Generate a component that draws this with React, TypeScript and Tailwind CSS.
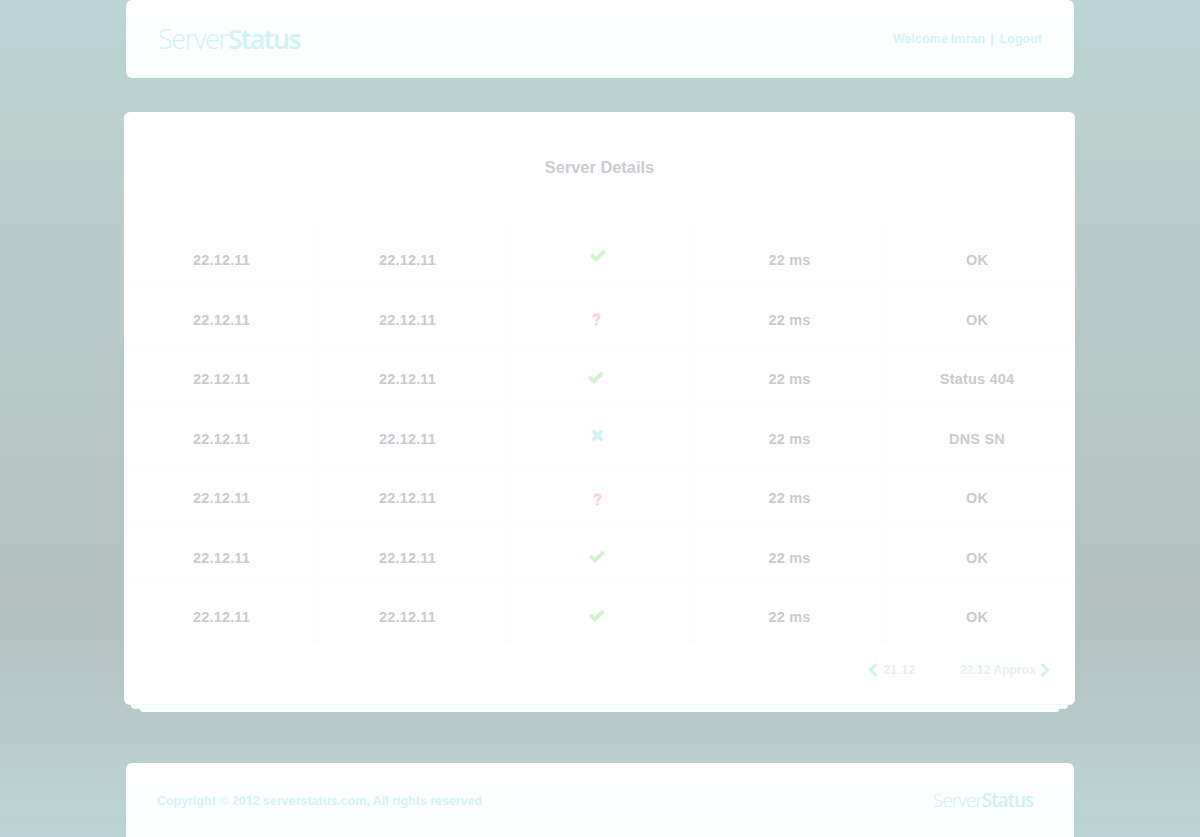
import React from "react";

type Status = "ok" | "unknown" | "fail";

interface Row {
  status: Status;
  place: string;
  height: string;
  result: string;
}

const rows: Row[] = [
  { status: "ok", place: "pl-[2px] pb-[1px]", height: "h-[60px]", result: "OK" },
  { status: "unknown", place: "pt-[6px] pr-[1px]", height: "h-[59px]", result: "OK" },
  { status: "ok", place: "pt-[5px] pr-[2px]", height: "h-[60px]", result: "Status 404" },
  { status: "fail", place: "pl-[1px]", height: "h-[59px]", result: "DNS SN" },
  { status: "unknown", place: "pt-[9px] pl-[1px]", height: "h-[60px]", result: "OK" },
  { status: "ok", place: "pt-[6px]", height: "h-[59px]", result: "OK" },
  { status: "ok", place: "pt-[5px]", height: "h-[60px]", result: "OK" },
];

function StatusIcon({ status }: { status: Status }) {
  if (status === "ok") {
    return (
      <svg width="16" height="12" viewBox="0 0 16 12" className="block">
        <path d="M0 6.4 2.5 3.8 5.8 7.2 13.2 0 15.8 2.5 5.8 12Z" fill="#d3f3cd" />
        <path d="M0.3 6.1 2.5 3.8 5.8 7.2 13.2 0 15.6 2.3" fill="none" stroke="#cbe9c9" strokeWidth=".5" />
      </svg>
    );
  }
  if (status === "fail") {
    return (
      <svg width="13" height="13" viewBox="0 0 13 13" className="block">
        <path
          d="M2.8 .5 6.5 3.6 10.2 .5 12.5 2.8 9.4 6.5 12.5 10.2 10.2 12.5 6.5 9.4 2.8 12.5 .5 10.2 3.6 6.5 .5 2.8Z"
          fill="#d1f3f5"
        />
      </svg>
    );
  }
  return (
    <svg width="9" height="13" viewBox="0 0 9 13" className="block">
      <path d="M1.5 4.5C1.5 2.6 2.7 1.7 4.3 1.7S7.2 2.6 7.2 4.1C7.2 6.1 4.3 6 4.3 8.7" fill="none" stroke="#fad4d4" strokeWidth="2.8" />
      <rect x="2.8" y="9.8" width="3" height="2.5" fill="#fad4d4" />
    </svg>
  );
}

function Arrow({ right = false }: { right?: boolean }) {
  return (
    <svg width="10" height="14" viewBox="0 0 10 14" className="block">
      <path
        d={right ? "M1.5 1 7.8 7 1.5 13" : "M8.5 1 2.2 7 8.5 13"}
        fill="none"
        stroke="#cff3f4"
        strokeWidth="3"
      />
    </svg>
  );
}

function Cell({ children }: { children: React.ReactNode }) {
  return (
    <div className="flex items-center justify-center border-l border-[#f8fdfd] pt-[8px]">{children}</div>
  );
}

export default function App() {
  return (
    <div className="flex h-[837px] w-[1200px] flex-col items-center overflow-hidden bg-[linear-gradient(180deg,#bbd4d6_0%,#bad3d4_5%,#b9d3ce_8%,#b9d2d3_11%,#bad1ce_14%,#b8cccb_30%,#b6c6c5_50%,#b5c1c1_72%,#b5c4c4_80%,#b9cdcc_89%,#b9d4d1_96%,#bad3d5_100%)] font-['Liberation_Sans',Arial,sans-serif] font-bold">
      <header className="flex h-[78px] w-[948px] shrink-0 items-center justify-between rounded-[6px] bg-linear-to-b from-white to-[#fafffe] pr-8 pl-8">
        <div className="pb-[2px] font-['Open_Sans',sans-serif] text-[27px] leading-none tracking-[-1.36px] text-[#d0f3f4]">
          <span className="font-light">Server</span>
          <span className="font-semibold tracking-[-1.66px]">Status</span>
        </div>
        <div className="flex pt-px text-[12.5px] leading-none text-[#d3f3f4]">
          <span>Welcome Imran</span>
          <span className="pr-[6px] pl-[5px]">|</span>
          <span>Logout</span>
        </div>
      </header>

      <main className="mt-[34px] ml-[124px] flex w-[951px] shrink-0 flex-col items-center self-start">
        <section className="z-20 h-[593px] w-[951px] rounded-[6px] border-b border-[#eff8f8] bg-white">
          <h1 className="flex h-[114px] items-center justify-center pb-[4px] text-[16.4px] leading-none text-[#cacace]">
            Server Details
          </h1>
          <div className="border-t border-[#f8fdfd] bg-[#fefefe] text-[14.5px] leading-none tracking-[0.18px] text-[#cacace]">
            {rows.map((row, index) => (
              <div
                key={index}
                className={`grid grid-cols-[190px_190px_190px_189px_192px] border-b border-[#f8fcfc] ${row.height}`}
              >
                <div className="flex items-center justify-center pt-[8px] pl-[5px]">22.12.11</div>
                <Cell>
                  <span className="mr-[4px]">22.12.11</span>
                </Cell>
                <div className="flex border-l border-[#f8fdfd] pr-[6px]">
                  <div className={`flex flex-1 items-center justify-center ${row.place}`}>
                    <StatusIcon status={row.status} />
                  </div>
                </div>
                <Cell>
                  <span className="ml-px">22 ms</span>
                </Cell>
                <Cell>
                  <span className="mr-[5px]">{row.result}</span>
                </Cell>
              </div>
            ))}
          </div>
          <nav className="flex h-[52px] items-center justify-end pr-[25px] text-[12px] leading-none tracking-[0.1px] text-[#e7efef]">
            <Arrow />
            <span className="ml-[5px] tracking-[0.5px]">21.12</span>
            <span className="mr-[4px] ml-[44px]">22.12 Approx</span>
            <Arrow right />
          </nav>
        </section>
        <div className="z-10 h-1 w-[937px] rounded-b-[6px] border-b border-[#ecf8f8] bg-white" />
        <div className="h-[3px] w-[919px] rounded-b-[4px] bg-[#fcffff]" />
      </main>

      <footer className="mt-[51px] flex h-[74px] w-[948px] shrink-0 items-center justify-between rounded-t-[6px] bg-linear-to-b from-white to-[#fafffe] pr-[41px] pl-[31px]">
        <p className="pt-[2px] text-[12.5px] leading-none tracking-[-0.02px] text-[#d3f3f4]">
          Copyright © 2012 serverstatus.com, All rights reserved
        </p>
        <div className="pt-px font-['Open_Sans',sans-serif] text-[19px] leading-none tracking-[-1px] text-[#cff0f1]">
          <span className="font-light">Server</span>
          <span className="font-semibold tracking-[-1.1px]">Status</span>
        </div>
      </footer>
    </div>
  );
}
